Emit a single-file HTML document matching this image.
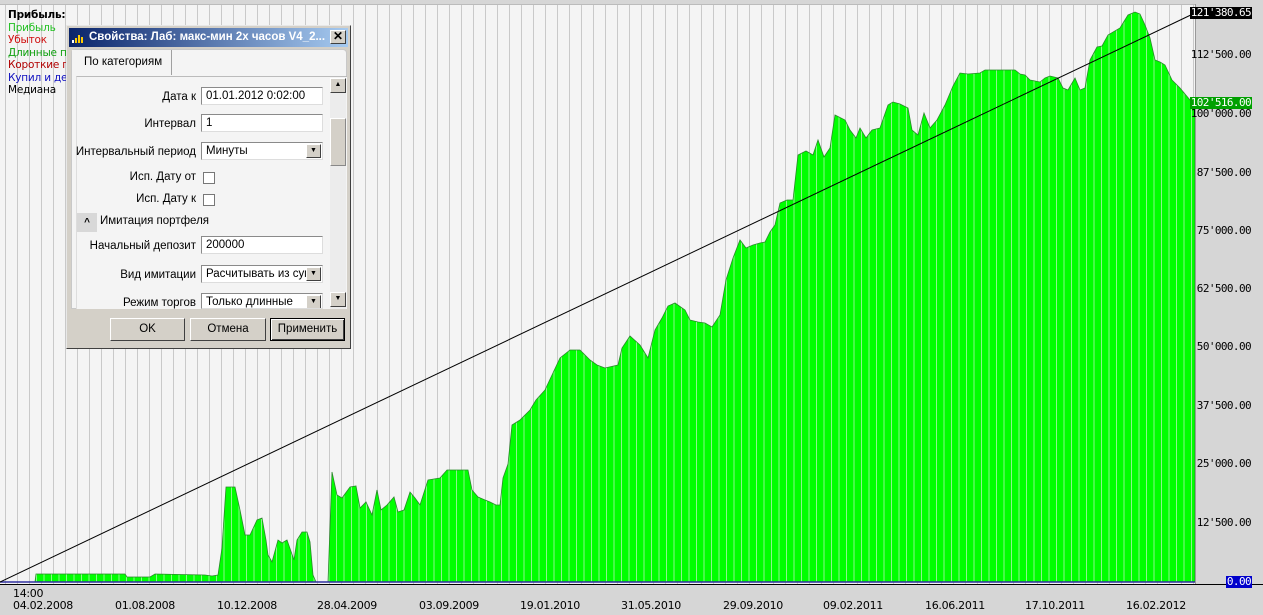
<!DOCTYPE html>
<html><head><meta charset="utf-8"><style>
*{margin:0;padding:0;box-sizing:border-box}
body{width:1263px;height:615px;overflow:hidden;background:#d6d6d6;font-family:"Liberation Sans",sans-serif;position:relative}
.ab{position:absolute}
.yl{position:absolute;right:11px;font:11px "DejaVu Sans Mono","Liberation Mono",monospace;letter-spacing:-0.6px;color:#000;line-height:12px;padding:0 1px}
.xl{position:absolute;top:599px;font:11px "DejaVu Sans","Liberation Sans",sans-serif;letter-spacing:-0.3px;color:#000}
.lg{font:10.5px "DejaVu Sans","Liberation Sans",sans-serif;line-height:12.5px;letter-spacing:-0.2px}
.lab{position:absolute;font-size:11.5px;color:#000;text-align:right;right:154px;white-space:nowrap}
.inp{position:absolute;left:134px;width:122px;height:18px;background:#fff;border:1px solid #8a8a8a;border-right-color:#ddd;border-bottom-color:#ddd;font-size:11.5px;padding:2px 4px;white-space:nowrap;overflow:hidden}
.dd{position:absolute;right:1px;top:1px;width:15px;height:14px;background:#d4d0c8;border:1px solid;border-color:#fff #404040 #404040 #fff;font-size:7px;text-align:center;line-height:12px}
.cb{position:absolute;left:136px;width:12px;height:12px;border:1px solid #777;background:#fff}
.btn{position:absolute;top:292px;height:23px;background:#d4d0c8;border:1px solid;border-color:#fff #404040 #404040 #fff;font-size:11.5px;text-align:center;line-height:21px}
</style></head><body>
<div class="ab" style="left:0;top:4px;width:1195px;height:580px;background:#f4f4f4;border-top:1px solid #bbb"></div>
<svg class="ab" style="left:0;top:0" width="1263" height="615">
<defs>
<pattern id="gv" width="12" height="615" patternUnits="userSpaceOnUse" x="5"><rect x="0" width="1" height="615" fill="#c9c9c9"/></pattern>
<pattern id="gg" width="7.5" height="615" patternUnits="userSpaceOnUse"><rect width="7.5" height="615" fill="#00ff00"/><rect x="6" width="1" height="615" fill="#8cf58c"/></pattern>
</defs>
<rect x="0" y="5" width="1195" height="579" fill="url(#gv)"/>
<polygon fill="url(#gg)" stroke="#2a8a2a" stroke-width="0.8" points="0,582 35,582 36,574 125,574 127,577 150,577 155,574 205,575 212,576 218,575 222,548 226,487 235,487 240,510 245,535 250,535 257,520 262,518 266,540 268,555 272,562 278,540 282,543 287,540 294,560 297,540 302,532 307,532 310,542 313,575 316,582 328,582 332,472 337,495 342,498 350,487 356,486 360,508 366,502 372,515 377,490 381,510 387,505 394,497 398,512 404,510 410,492 415,498 420,505 428,480 440,478 447,470 468,470 472,490 478,497 485,500 490,502 496,505 500,505 503,478 508,464 512,425 520,420 530,410 536,400 545,390 552,375 560,358 570,350 580,350 590,360 597,365 605,368 618,365 622,348 630,336 640,345 648,358 655,330 662,318 668,306 675,303 685,310 690,320 698,322 705,323 712,327 720,315 726,280 733,258 740,240 746,248 753,245 760,243 765,242 770,232 775,225 780,203 787,200 793,200 798,155 806,151 813,155 818,140 824,157 830,148 835,115 845,120 850,130 856,138 860,128 866,138 872,130 880,128 888,105 893,102 900,104 908,108 912,130 918,135 924,113 930,128 937,120 945,105 953,86 960,73 968,74 980,73 985,70 1015,70 1020,74 1025,75 1030,80 1040,82 1045,78 1050,76 1058,78 1063,88 1068,90 1075,78 1080,90 1085,88 1090,60 1097,47 1102,46 1108,35 1120,28 1128,15 1135,12 1140,14 1145,25 1150,38 1155,60 1160,62 1165,65 1172,80 1180,88 1190,100 1195,102 1195,582"/>
<line x1="0" y1="582" x2="1195" y2="582" stroke="#3030a0" stroke-width="1.5"/>
<line x1="0" y1="582" x2="1195" y2="13" stroke="#000" stroke-width="1"/>
<line x1="0" y1="584.5" x2="1263" y2="584.5" stroke="#000" stroke-width="1"/>
<line x1="1195.5" y1="4" x2="1195.5" y2="584" stroke="#999" stroke-width="1"/>
</svg>
<div class="yl" style="top:7px;background:#000;color:#fff">121'380.65</div>
<div class="yl" style="top:49px">112'500.00</div>
<div class="yl" style="top:97px;background:#00a000;color:#fff">102'516.00</div>
<div class="yl" style="top:108px">100'000.00</div>
<div class="yl" style="top:167px">87'500.00</div>
<div class="yl" style="top:225px">75'000.00</div>
<div class="yl" style="top:283px">62'500.00</div>
<div class="yl" style="top:341px">50'000.00</div>
<div class="yl" style="top:400px">37'500.00</div>
<div class="yl" style="top:458px">25'000.00</div>
<div class="yl" style="top:517px">12'500.00</div>
<div class="yl" style="top:576px;background:#0000cc;color:#fff">0.00</div>
<div class="xl" style="left:13px;top:587px">14:00</div>
<div class="xl" style="left:13px">04.02.2008</div>
<div class="xl" style="left:115px">01.08.2008</div>
<div class="xl" style="left:217px">10.12.2008</div>
<div class="xl" style="left:317px">28.04.2009</div>
<div class="xl" style="left:419px">03.09.2009</div>
<div class="xl" style="left:520px">19.01.2010</div>
<div class="xl" style="left:621px">31.05.2010</div>
<div class="xl" style="left:723px">29.09.2010</div>
<div class="xl" style="left:823px">09.02.2011</div>
<div class="xl" style="left:925px">16.06.2011</div>
<div class="xl" style="left:1025px">17.10.2011</div>
<div class="xl" style="left:1126px">16.02.2012</div>
<div class="ab lg" style="left:8px;top:9px">
<div style="font-weight:bold">Прибыль:</div>
<div style="color:#22c022">Прибыль</div>
<div style="color:#d01010">Убыток</div>
<div style="color:#10a010">Длинные позиции</div>
<div style="color:#b00000">Короткие позиции</div>
<div style="color:#1010c0">Купил и держи</div>
<div>Медиана</div>
</div>
<!-- dialog -->
<div class="ab" style="left:66px;top:25px;width:285px;height:324px;background:#d4d0c8;border:1px solid;border-color:#e8e8e8 #404040 #404040 #e8e8e8">
 <div class="ab" style="left:2px;top:2px;width:279px;height:19px;background:linear-gradient(90deg,#0a246a,#a6caf0);color:#fff;font-weight:bold;font-size:11.5px;line-height:19px;padding-left:20px;white-space:nowrap;overflow:hidden">Свойства: Лаб: макс-мин 2х часов V4_2...
  <svg class="ab" style="left:3px;top:4px" width="14" height="12"><rect x="0" y="8" width="2" height="3" fill="#fff"/><rect x="3" y="6" width="2" height="5" fill="#fc0"/><rect x="6" y="3" width="2" height="8" fill="#fc0"/><rect x="9" y="5" width="2" height="6" fill="#fc0"/></svg>
  <div class="ab" style="right:2px;top:2px;width:16px;height:14px;background:#d4d0c8;border:1px solid;border-color:#fff #404040 #404040 #fff;color:#000;font-size:12px;line-height:11px;text-align:center;padding:0">✕</div>
 </div>
 <div class="ab" style="left:4px;top:23px;width:276px;height:260px;background:#f4f4f4;border:1px solid #c8c8c8;border-radius:4px 4px 0 0"></div>
 <div class="ab" style="left:5px;top:24px;width:100px;height:25px;background:#f4f4f4;border-right:1px solid #a0a0a0;font-size:11.5px;line-height:24px;padding-left:12px">По категориям</div>
 <div class="ab" style="left:9px;top:50px;width:271px;height:233px;background:#f4f4f4;border-top:1px solid #bbb;border-left:1px solid #ddd"></div>
 <div class="lab" style="top:65px">Дата к</div><div class="inp" style="top:61px">01.01.2012 0:02:00</div>
 <div class="lab" style="top:92px">Интервал</div><div class="inp" style="top:88px">1</div>
 <div class="lab" style="top:120px">Интервальный период</div><div class="inp" style="top:116px">Минуты<div class="dd">▼</div></div>
 <div class="lab" style="top:145px">Исп. Дату от</div><div class="cb" style="top:146px"></div>
 <div class="lab" style="top:167px">Исп. Дату к</div><div class="cb" style="top:168px"></div>
 <div class="ab" style="left:10px;top:187px;width:20px;height:19px;background:#d8d8d8;font-size:10px;text-align:center;line-height:19px;font-weight:bold">^</div>
 <div class="ab" style="left:33px;top:189px;font-size:11.5px">Имитация портфеля</div>
 <div class="lab" style="top:214px">Начальный депозит</div><div class="inp" style="top:210px">200000</div>
 <div class="lab" style="top:243px">Вид имитации</div><div class="inp" style="top:239px">Расчитывать из сумм<div class="dd">▼</div></div>
 <div class="lab" style="top:271px;height:12px;overflow:hidden">Режим торгов</div><div class="inp" style="top:267px;height:16px">Только длинные<div class="dd">▼</div></div>
 <div class="ab" style="left:263px;top:52px;width:16px;height:231px;background:#ececec">
  <div class="ab" style="left:0;top:0;width:16px;height:15px;background:#d4d0c8;border:1px solid;border-color:#fff #404040 #404040 #fff;font-size:7px;text-align:center;line-height:12px">▲</div>
  <div class="ab" style="left:0;top:40px;width:16px;height:48px;background:#d4d0c8;border:1px solid;border-color:#fff #888 #888 #fff"></div>
  <div class="ab" style="left:0;top:214px;width:16px;height:15px;background:#d4d0c8;border:1px solid;border-color:#fff #404040 #404040 #fff;font-size:7px;text-align:center;line-height:12px">▼</div>
 </div>
 <div class="btn" style="left:43px;width:75px">OK</div>
 <div class="btn" style="left:123px;width:76px">Отмена</div>
 <div class="btn" style="left:203px;width:75px;border:1px solid #000;box-shadow:inset 1px 1px #fff,inset -1px -1px #404040">Применить</div>
</div>
</body></html>
